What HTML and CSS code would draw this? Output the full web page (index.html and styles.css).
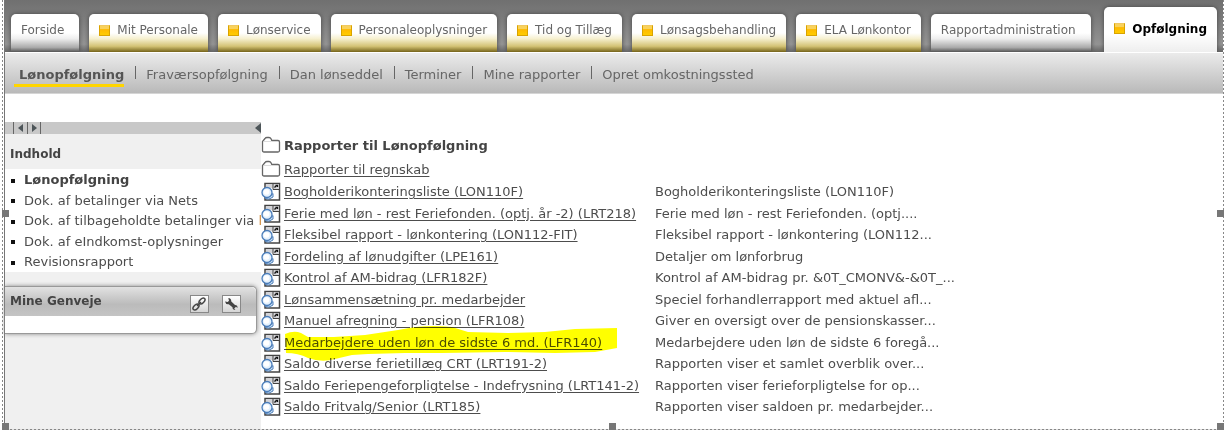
FILE: index.html
```html
<!DOCTYPE html>
<html lang="da">
<head>
  <meta charset="UTF-8">
  <meta name="viewport" content="width=device-width, initial-scale=1.0">
  <title>Lønopfølgning</title>
  <link rel="stylesheet" href="styles.css">
</head>
<body>
  <svg class="sprite" aria-hidden="true">
    <symbol id="folder" viewBox="0 0 20 18">
      <path d="M1.5 14.5V5.500L4 2.500Q4.600 1.500 6 1.500H8Q9.400 1.500 10 2.800L10.800 4.500H17Q18.500 4.500 18.500 6V14.500Q18.500 16 17 16H3Q1.500 16 1.500 14.500Z" fill="#fff" stroke="#666" stroke-width="1.300"/>
      <path d="M2.500 5.500H10" stroke="#ddd" fill="none"/>
    </symbol>
    <symbol id="report" viewBox="0 0 20 20">
      <path d="M4 1.500H18.500V18H4Z" fill="#fff" stroke="#444" stroke-width="1.500"/>
      <path d="M5 2.200H12V6H5ZM12.500 2.200H18V7H12.500Z" fill="#d4d4d8"/>
      <path d="M12 1.500V7.500H18.500" fill="none" stroke="#444"/>
      <path d="M13.500 5.500L15.500 3.500M14.500 3.500H16.500V5" fill="none" stroke="#111" stroke-width="1.300"/>
      <path d="M9 14L12 11.500V15Q8 18.500 4 16.500" fill="#d5e8f8" stroke="#4a7dba"/>
      <circle cx="6" cy="10.500" r="5" fill="#e4f1fd" stroke="#4a7dba" stroke-width="1.300"/>
      <circle cx="5.500" cy="10" r="2.800" fill="#fff"/>
    </symbol>
  </svg>

  <div class="frame">
    <div class="portal">
      <nav class="tabs">
        <a href="#" class="tab plain">Forside</a>
        <a href="#" class="tab"><i></i>Mit Personale</a>
        <a href="#" class="tab"><i></i>Lønservice</a>
        <a href="#" class="tab"><i></i>Personaleoplysninger</a>
        <a href="#" class="tab"><i></i>Tid og Tillæg</a>
        <a href="#" class="tab"><i></i>Lønsagsbehandling</a>
        <a href="#" class="tab"><i></i>ELA Lønkontor</a>
        <a href="#" class="tab plain">Rapportadministration</a>
        <a href="#" class="tab active"><i></i>Opfølgning</a>
      </nav>
      <nav class="subnav">
        <a href="#" class="current">Lønopfølgning</a>
        <a href="#">Fraværsopfølgning</a>
        <a href="#">Dan lønseddel</a>
        <a href="#">Terminer</a>
        <a href="#">Mine rapporter</a>
        <a href="#">Opret omkostningssted</a>
      </nav>

      <div class="content">
        <aside class="sidebar">
          <div class="toolbar">
            <button class="step" aria-label="Tilbage"><svg width="5" height="8" viewBox="0 0 5 8"><path d="M5 0V8L0 4Z"/></svg></button>
            <button class="step" aria-label="Frem"><svg width="5" height="8" viewBox="0 0 5 8"><path d="M0 0V8L5 4Z"/></svg></button>
            <button class="collapse" aria-label="Skjul"><svg width="6" height="10" viewBox="0 0 6 10"><path d="M6 0V10L0 5Z"/></svg></button>
          </div>
          <h2 class="title">Indhold</h2>
          <ul class="menu">
            <li class="current"><a href="#">Lønopfølgning</a></li>
            <li><a href="#">Dok. af betalinger via Nets</a></li>
            <li><a href="#">Dok. af tilbageholdte betalinger via <span class="cut">l</span></a></li>
            <li><a href="#">Dok. af eIndkomst-oplysninger</a></li>
            <li><a href="#">Revisionsrapport</a></li>
          </ul>
          <section class="shortcuts">
            <header>
              <h2>Mine Genveje</h2>
              <button aria-label="Tilføj genvej">
                <svg width="16" height="16" viewBox="0 0 16 16" fill="none" stroke="#444" stroke-width="1.500">
                  <ellipse cx="5" cy="11" rx="3.600" ry="2.100" transform="rotate(-45 5 11)"/>
                  <ellipse cx="11" cy="5" rx="3.600" ry="2.100" transform="rotate(-45 11 5)"/>
                  <path d="M6 10L10 6"/>
                </svg>
              </button>
              <button aria-label="Rediger genveje">
                <svg width="16" height="16" viewBox="0 0 16 16">
                  <path d="M2 5.500L4.700 6L6 4.700L5.300 2Q8.300 2.300 8.300 5.500L12 9Q14.800 9.200 14.500 12L13 10.800L11.200 12.500L12.400 14Q9.400 14 9.500 11.300L5.700 8.200Q2.700 8.700 2 5.500Z" fill="#444"/>
                </svg>
              </button>
            </header>
            <div class="empty"></div>
          </section>
        </aside>

        <main class="reports">
          <h1><svg class="folder"><use href="#folder"/></svg>Rapporter til Lønopfølgning</h1>
          <p><svg class="folder"><use href="#folder"/></svg><a href="#">Rapporter til regnskab</a></p>
          <table>
            <tbody>
              <tr><td><svg><use href="#report"/></svg></td><td><a href="#">Bogholderikonteringsliste (LON110F)</a></td><td>Bogholderikonteringsliste (LON110F)</td></tr>
              <tr><td><svg><use href="#report"/></svg></td><td><a href="#">Ferie med løn - rest Feriefonden. (optj. år -2) (LRT218)</a></td><td>Ferie med løn - rest Feriefonden. (optj....</td></tr>
              <tr><td><svg><use href="#report"/></svg></td><td><a href="#">Fleksibel rapport - lønkontering (LON112-FIT)</a></td><td>Fleksibel rapport - lønkontering (LON112...</td></tr>
              <tr><td><svg><use href="#report"/></svg></td><td><a href="#">Fordeling af lønudgifter (LPE161)</a></td><td>Detaljer om lønforbrug</td></tr>
              <tr><td><svg><use href="#report"/></svg></td><td><a href="#">Kontrol af AM-bidrag (LFR182F)</a></td><td>Kontrol af AM-bidrag pr. &amp;0T_CMONV&amp;-&amp;0T_...</td></tr>
              <tr><td><svg><use href="#report"/></svg></td><td><a href="#">Lønsammensætning pr. medarbejder</a></td><td>Speciel forhandlerrapport med aktuel afl...</td></tr>
              <tr><td><svg><use href="#report"/></svg></td><td><a href="#">Manuel afregning - pension (LFR108)</a></td><td>Giver en oversigt over de pensionskasser...</td></tr>
              <tr>
                <td><svg><use href="#report"/></svg></td>
                <td class="marked">
                  <a href="#">Medarbejdere uden løn de sidste 6 md. (LFR140)</a>
                  <svg class="marker" viewBox="0 0 334 36"><path d="M1 9Q10 5 17 8L24 12H50L81 10L114 5L131 2Q150 0 168 2L184 7L224 8L261 7L291 4L333 3V23L311 27L271 28L221 27L158 28H121L84 29L68 30L51 34Q38 38 24 33Q14 28 2 28Z" fill="#ff0"/></svg>
                </td>
                <td>Medarbejdere uden løn de sidste 6 foregå...</td>
              </tr>
              <tr><td><svg><use href="#report"/></svg></td><td><a href="#">Saldo diverse ferietillæg CRT (LRT191-2)</a></td><td>Rapporten viser et samlet overblik over...</td></tr>
              <tr><td><svg><use href="#report"/></svg></td><td><a href="#">Saldo Feriepengeforpligtelse - Indefrysning (LRT141-2)</a></td><td>Rapporten viser ferieforpligtelse for op...</td></tr>
              <tr><td><svg><use href="#report"/></svg></td><td><a href="#">Saldo Fritvalg/Senior (LRT185)</a></td><td>Rapporten viser saldoen pr. medarbejder...</td></tr>
            </tbody>
          </table>
        </main>
      </div>
    </div>
    <span class="handle left middle"></span>
    <span class="handle left bottom"></span>
    <span class="handle center bottom"></span>
    <span class="handle right middle"></span>
    <span class="handle right bottom"></span>
  </div>
</body>
</html>
```
FILE: styles.css
```css
* {
  box-sizing: border-box;
}
body {
  margin: 0 3px 1px 2px;
  font-family: Verdana, "DejaVu Sans", sans-serif;
  font-size: 13px;
  color: #4d4d4d;
  background: #fff;
}
a {
  color: inherit;
  text-decoration: none;
}
h1, h2, p, ul {
  margin: 0;
  padding: 0;
}
button {
  padding: 0;
  border: none;
  background: none;
  cursor: pointer;
}
.sprite {
  display: none;
}

/* dashed selection frame with handles */
.frame {
  position: relative;
  display: flex;
  min-height: calc(100vh - 1px);
  padding: 0 1px 1px 2px;
  background:
    repeating-linear-gradient(#888 0 2px, #fff 2px 4px) left / 1px 100% no-repeat,
    repeating-linear-gradient(#888 0 2px, #fff 2px 4px) right / 1px 100% no-repeat,
    repeating-linear-gradient(90deg, #888 0 2px, #ddd 2px 4px) bottom / 100% 1px no-repeat;
}
.handle {
  position: absolute;
  width: 7px;
  height: 7px;
  background: #777;
}
.left { left: 0; }
.center { left: calc(50% - 4px); }
.right { right: 0; }
.middle { top: calc(50% - 5px); }
.bottom { bottom: 0; }

.portal {
  flex: 1;
  display: flex;
  flex-direction: column;
  min-width: 0;
  border-left: 1px solid #777;
}

/* top tabs */
.tabs {
  display: flex;
  align-items: flex-end;
  gap: 10px;
  height: 52px;
  padding: 0 6px;
  overflow: hidden;
  background: linear-gradient(#707070, #7a7a7a 30%, #939393 85%, #666);
  font-size: 12px;
}
.tab {
  display: flex;
  align-items: center;
  height: 38px;
  padding: 0 10px 6px;
  border-radius: 5px 5px 0 0;
  color: #666;
  white-space: nowrap;
  background: linear-gradient(#fff 50%, #f6f0cf 65%, #d3c274 85%, #75631a);
  box-shadow: 0 0 4px #444;
}
.tab.plain {
  padding-right: 15px;
  background: linear-gradient(#fff 50%, #eee 65%, #aaa 88%, #555);
}
.tab.active {
  height: 45px;
  padding-bottom: 2px;
  margin-left: auto;
  color: #000;
  font-weight: bold;
  background: linear-gradient(#fff 60%, #eee);
}
.tab i {
  width: 11px;
  height: 11px;
  margin-right: 7px;
  border: 1px solid #d9a300;
  border-top-color: #f0c860;
  background: linear-gradient(#f9d25c 30%, #ffb900 40%, #ffcc00);
}

.subnav {
  display: flex;
  align-items: center;
  height: 42px;
  padding: 4px 14px 0;
  border-top: 1px solid #fff;
  border-bottom: 1px solid #d5d5d5;
  background: linear-gradient(#ebebeb, #b9b9b9);
  color: #666;
}
.subnav a {
  line-height: 18px;
}
.subnav a + a::before {
  content: "";
  display: inline-block;
  width: 1px;
  height: 13px;
  margin: 0 10px 0 11px;
  background: #666;
}
.subnav .current {
  margin-left: -5px;
  padding: 3px 0 0 5px;
  border-bottom: 3px solid #ffd500;
  color: #555;
  font-weight: bold;
}

.content {
  flex: 1;
  display: flex;
  padding-top: 28px;
}

/* left column */
.sidebar {
  flex: none;
  width: 256px;
  background: #f0f0f0;
}
.toolbar {
  display: flex;
  height: 12px;
  padding-left: 8px;
  background: #c8c8c8;
}
.toolbar svg {
  display: block;
  margin: auto;
  fill: #4d5559;
}
.step {
  width: 14px;
  border-left: 1px solid #666;
}
.step + .step {
  border-right: 1px solid #666;
}
.collapse {
  margin-left: auto;
}
.sidebar h2 {
  padding-left: 5px;
  font-size: 12px;
  color: #444;
}
.title {
  padding: 6px 0 0;
  line-height: 29px;
}
.menu {
  overflow: hidden;
  list-style: none;
  background: #fff;
}
.menu li {
  display: flex;
  align-items: center;
  height: 21px;
  white-space: nowrap;
}
.menu li:nth-child(even) {
  height: 20px;
}
.menu li::before {
  content: "";
  flex: none;
  width: 4px;
  height: 4px;
  margin: 2px 9px 0 6px;
  background: #111;
}
.menu .current {
  font-weight: bold;
  color: #444;
}
.cut {
  color: #d08a3c;
}
.shortcuts {
  margin: 14px 4px 0 0;
  border: 1px solid #999;
  border-left: none;
  border-radius: 0 5px 5px 0;
  background: #fff;
  box-shadow: 0 0 4px #888;
}
.shortcuts header {
  display: flex;
  align-items: center;
  height: 29px;
  padding-right: 15px;
  border-radius: 0 5px 0 0;
  background: linear-gradient(#e2e2e2, #bbb 60%, #c4c4c4);
}
.shortcuts h2 {
  flex: 1;
  line-height: 29px;
}
.shortcuts button {
  width: 19px;
  height: 18px;
  margin: 4px 0 0 13px;
  border: 1px solid #888;
  background: linear-gradient(#fff, #d5d5d5);
}
.shortcuts button svg {
  display: block;
}
.empty {
  height: 17px;
}

/* report list */
.reports {
  flex: 1;
  min-width: 0;
  padding-top: 11px;
}
.reports h1,
.reports p {
  display: flex;
  align-items: center;
  height: 24px;
  font-size: 13px;
}
.reports h1 {
  color: #444;
}
.reports a {
  text-decoration: underline;
  text-underline-offset: 2px;
}
.folder {
  width: 20px;
  height: 18px;
  margin-right: 3px;
}
table {
  border-collapse: collapse;
}
tr {
  height: 22px;
}
tr:nth-child(even) {
  height: 21px;
}
td {
  padding: 0;
  line-height: 20px;
  white-space: nowrap;
}
td:first-child {
  width: 23px;
}
td:first-child svg {
  display: block;
  width: 20px;
  height: 20px;
}
td:nth-child(2) {
  width: 371px;
}
.marked {
  position: relative;
}
.marker {
  position: absolute;
  left: 0;
  top: -7px;
  width: 334px;
  height: 36px;
  pointer-events: none;
  mix-blend-mode: multiply;
}
```
